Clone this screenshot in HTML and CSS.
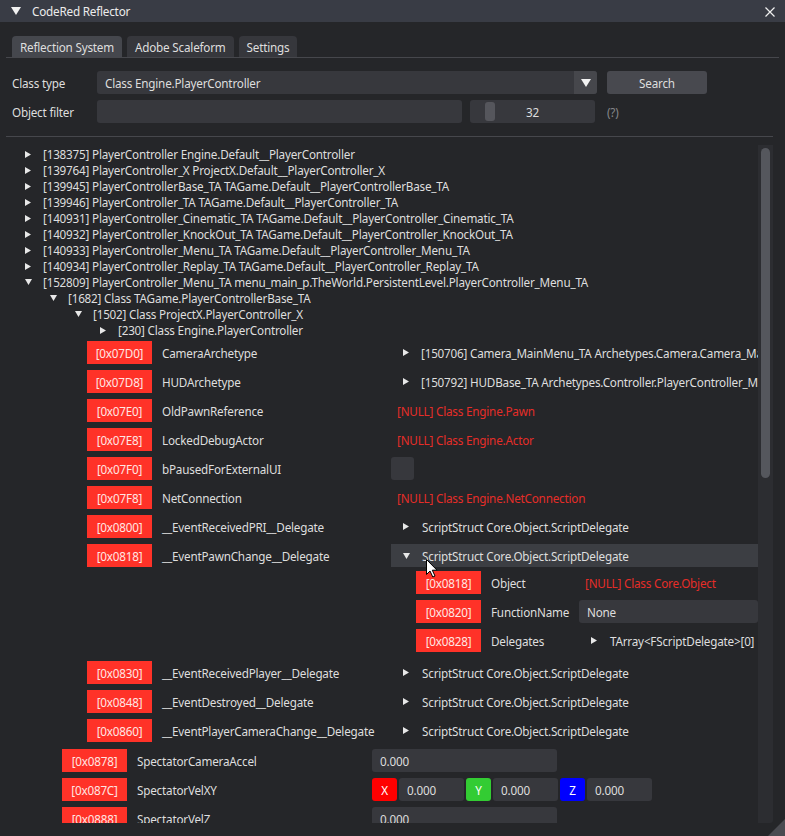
FILE: index.html
```html
<!DOCTYPE html>
<html>
<head>
<meta charset="utf-8">
<link rel="stylesheet" href="styles.css">
</head>
<body>
<div class="window">
  <div class="titlebar">
    <svg class="title-tri" width="10" height="8" viewBox="0 0 10 8"><polygon points="0,0 10,0 5,8" fill="#f2f2f2"/></svg>
    <span class="title">CodeRed Reflector</span>
    <svg class="close" width="10" height="10" viewBox="0 0 10 10"><path d="M0.5 0.5 L9.5 9.5 M9.5 0.5 L0.5 9.5" stroke="#f0f0f0" stroke-width="1.2"/></svg>
  </div>
  <div class="content">
    <div class="tabbar">
      <div class="tab active">Reflection System</div>
      <div class="tab">Adobe Scaleform</div>
      <div class="tab">Settings</div>
    </div>
    <div class="form">
      <div class="frow first">
        <div class="flabel">Class type</div>
        <div class="combo">
          <span class="combo-text">Class Engine.PlayerController</span>
          <span class="combo-arrow"><svg width="10" height="8" viewBox="0 0 10 8"><polygon points="0,0 10,0 5,8" fill="#f2f2f2"/></svg></span>
        </div>
        <div class="btn">Search</div>
      </div>
      <div class="frow">
        <div class="flabel">Object filter</div>
        <div class="finput"></div>
        <div class="slider"><span class="sgrab"></span><span class="sval">32</span></div>
        <div class="help">(?)</div>
      </div>
    </div>
    <div class="sep"></div>
    <div class="child">
      <div class="scroll">
        <div class="trow l0"><span class="arr"><svg width="6" height="7" viewBox="0 0 6 7"><polygon points="0,0 6,3.5 0,7"/></svg></span>[138375] PlayerController Engine.Default__PlayerController</div>
        <div class="trow l0"><span class="arr"><svg width="6" height="7" viewBox="0 0 6 7"><polygon points="0,0 6,3.5 0,7"/></svg></span>[139764] PlayerController_X ProjectX.Default__PlayerController_X</div>
        <div class="trow l0"><span class="arr"><svg width="6" height="7" viewBox="0 0 6 7"><polygon points="0,0 6,3.5 0,7"/></svg></span>[139945] PlayerControllerBase_TA TAGame.Default__PlayerControllerBase_TA</div>
        <div class="trow l0"><span class="arr"><svg width="6" height="7" viewBox="0 0 6 7"><polygon points="0,0 6,3.5 0,7"/></svg></span>[139946] PlayerController_TA TAGame.Default__PlayerController_TA</div>
        <div class="trow l0"><span class="arr"><svg width="6" height="7" viewBox="0 0 6 7"><polygon points="0,0 6,3.5 0,7"/></svg></span>[140931] PlayerController_Cinematic_TA TAGame.Default__PlayerController_Cinematic_TA</div>
        <div class="trow l0"><span class="arr"><svg width="6" height="7" viewBox="0 0 6 7"><polygon points="0,0 6,3.5 0,7"/></svg></span>[140932] PlayerController_KnockOut_TA TAGame.Default__PlayerController_KnockOut_TA</div>
        <div class="trow l0"><span class="arr"><svg width="6" height="7" viewBox="0 0 6 7"><polygon points="0,0 6,3.5 0,7"/></svg></span>[140933] PlayerController_Menu_TA TAGame.Default__PlayerController_Menu_TA</div>
        <div class="trow l0"><span class="arr"><svg width="6" height="7" viewBox="0 0 6 7"><polygon points="0,0 6,3.5 0,7"/></svg></span>[140934] PlayerController_Replay_TA TAGame.Default__PlayerController_Replay_TA</div>
        <div class="trow l0"><span class="arr"><svg width="7" height="6" viewBox="0 0 7 6"><polygon points="0,0 7,0 3.5,6"/></svg></span>[152809] PlayerController_Menu_TA menu_main_p.TheWorld.PersistentLevel.PlayerController_Menu_TA</div>
        <div class="trow l1"><span class="arr"><svg width="7" height="6" viewBox="0 0 7 6"><polygon points="0,0 7,0 3.5,6"/></svg></span>[1682] Class TAGame.PlayerControllerBase_TA</div>
        <div class="trow l2"><span class="arr"><svg width="7" height="6" viewBox="0 0 7 6"><polygon points="0,0 7,0 3.5,6"/></svg></span>[1502] Class ProjectX.PlayerController_X</div>
        <div class="trow l3"><span class="arr"><svg width="6" height="7" viewBox="0 0 6 7"><polygon points="0,0 6,3.5 0,7"/></svg></span>[230] Class Engine.PlayerController</div>

        <div class="tbl tbl-a">
          <div class="lbl">[0x07D0]</div><div class="nm">CameraArchetype</div>
          <div class="val"><div class="node"><span class="varr"><svg width="6" height="7" viewBox="0 0 6 7"><polygon points="0,0 6,3.5 0,7"/></svg></span>[150706] Camera_MainMenu_TA Archetypes.Camera.Camera_MainMenu_TA</div></div>

          <div class="lbl">[0x07D8]</div><div class="nm">HUDArchetype</div>
          <div class="val"><div class="node"><span class="varr"><svg width="6" height="7" viewBox="0 0 6 7"><polygon points="0,0 6,3.5 0,7"/></svg></span>[150792] HUDBase_TA Archetypes.Controller.PlayerController_Menu_TA</div></div>

          <div class="lbl">[0x07E0]</div><div class="nm">OldPawnReference</div>
          <div class="val"><div class="null">[NULL] Class Engine.Pawn</div></div>

          <div class="lbl">[0x07E8]</div><div class="nm">LockedDebugActor</div>
          <div class="val"><div class="null">[NULL] Class Engine.Actor</div></div>

          <div class="lbl">[0x07F0]</div><div class="nm">bPausedForExternalUI</div>
          <div class="val"><div class="chk"></div></div>

          <div class="lbl">[0x07F8]</div><div class="nm">NetConnection</div>
          <div class="val"><div class="null">[NULL] Class Engine.NetConnection</div></div>

          <div class="lbl">[0x0800]</div><div class="nm">__EventReceivedPRI__Delegate</div>
          <div class="val"><div class="node"><span class="varr"><svg width="6" height="7" viewBox="0 0 6 7"><polygon points="0,0 6,3.5 0,7"/></svg></span>ScriptStruct Core.Object.ScriptDelegate</div></div>

          <div class="lbl">[0x0818]</div><div class="nm">__EventPawnChange__Delegate</div>
          <div class="val">
            <div class="node hdr"><span class="varr"><svg width="7" height="6" viewBox="0 0 7 6"><polygon points="0,0 7,0 3.5,6"/></svg></span>ScriptStruct Core.Object.ScriptDelegate</div>
            <div class="tbl tbl-n">
              <div class="lbl">[0x0818]</div><div class="nm">Object</div>
              <div class="val"><div class="null">[NULL] Class Core.Object</div></div>
              <div class="lbl">[0x0820]</div><div class="nm">FunctionName</div>
              <div class="val"><div class="input">None</div></div>
              <div class="lbl">[0x0828]</div><div class="nm">Delegates</div>
              <div class="val"><div class="node"><span class="varr"><svg width="6" height="7" viewBox="0 0 6 7"><polygon points="0,0 6,3.5 0,7"/></svg></span>TArray&lt;FScriptDelegate&gt;[0]</div></div>
            </div>
          </div>

          <div class="lbl">[0x0830]</div><div class="nm">__EventReceivedPlayer__Delegate</div>
          <div class="val"><div class="node"><span class="varr"><svg width="6" height="7" viewBox="0 0 6 7"><polygon points="0,0 6,3.5 0,7"/></svg></span>ScriptStruct Core.Object.ScriptDelegate</div></div>

          <div class="lbl">[0x0848]</div><div class="nm">__EventDestroyed__Delegate</div>
          <div class="val"><div class="node"><span class="varr"><svg width="6" height="7" viewBox="0 0 6 7"><polygon points="0,0 6,3.5 0,7"/></svg></span>ScriptStruct Core.Object.ScriptDelegate</div></div>

          <div class="lbl">[0x0860]</div><div class="nm">__EventPlayerCameraChange__Delegate</div>
          <div class="val"><div class="node"><span class="varr"><svg width="6" height="7" viewBox="0 0 6 7"><polygon points="0,0 6,3.5 0,7"/></svg></span>ScriptStruct Core.Object.ScriptDelegate</div></div>
        </div>

        <div class="tbl tbl-o">
          <div class="lbl">[0x0878]</div><div class="nm">SpectatorCameraAccel</div>
          <div class="val"><div class="input w185">0.000</div></div>

          <div class="lbl">[0x087C]</div><div class="nm">SpectatorVelXY</div>
          <div class="val vec">
            <div class="axis ax-x">X</div><div class="input w65">0.000</div>
            <div class="axis ax-y">Y</div><div class="input w65">0.000</div>
            <div class="axis ax-z">Z</div><div class="input w65">0.000</div>
          </div>

          <div class="lbl">[0x0888]</div><div class="nm">SpectatorVelZ</div>
          <div class="val"><div class="input w185">0.000</div></div>
        </div>
      </div>
      <div class="scrollbar"><div class="sb-grab"></div></div>
    </div>
  </div>
  <svg class="grip" width="17" height="17" viewBox="0 0 17 17"><polygon points="0,17 17,17 17,0" fill="#4a4b51"/></svg>
  <svg class="cursor" width="13" height="19" viewBox="0 0 13 19"><path d="M0.5 0.5 L0.5 15.5 L4 12 L6.8 18 L9 17 L6.3 11.2 L11 11.2 Z" fill="#ffffff" stroke="#000000" stroke-width="1"/></svg>
</div>
</body>
</html>
```

FILE: styles.css
```css
* { box-sizing: border-box; }

body {
  margin: 0;
  background: #252629;
  font-family: "Noto Sans", "Open Sans", sans-serif;
  font-size: 11.7px;
  letter-spacing: -0.2px;
  color: #dedede;
  overflow: hidden;
}

.window {
  position: relative;
  width: 785px;
  height: 836px;
  overflow: hidden;
  background: #252629;
}

.titlebar {
  height: 22px;
  background: #393c45;
  display: flex;
  align-items: center;
  position: relative;
}

.title-tri {
  margin-left: 11px;
  margin-right: 11px;
}

.title {
  color: #ececec;
}

.close {
  position: absolute;
  right: 10px;
  top: 7px;
}

.content {
  padding: 0 6px;
}

.tabbar {
  margin-top: 14px;
  padding-left: 6px;
  display: flex;
  gap: 5px;
  border-bottom: 1px solid #46474c;
}

.tab {
  height: 21px;
  padding: 0 8px;
  display: flex;
  align-items: center;
  background: #36373c;
  border-radius: 4px 4px 0 0;
}

.tab.active {
  background: #45474d;
}

.form {
  padding-left: 6px;
}

.frow {
  display: flex;
  align-items: center;
  height: 23px;
  margin-top: 6px;
}

.frow.first {
  margin-top: 13px;
}

.flabel {
  width: 85px;
}

.combo {
  width: 500px;
  height: 23px;
  background: #37383d;
  border-radius: 3px;
  display: flex;
  align-items: center;
  overflow: hidden;
}

.combo-text {
  flex: 1;
  padding-left: 8px;
}

.combo-arrow {
  width: 23px;
  height: 23px;
  background: #46474c;
  display: flex;
  align-items: center;
  justify-content: center;
}

.btn {
  margin-left: 10px;
  width: 100px;
  height: 23px;
  background: #48494f;
  border-radius: 3px;
  display: flex;
  align-items: center;
  justify-content: center;
}

.finput {
  width: 365px;
  height: 23px;
  background: #37383d;
  border-radius: 3px;
}

.slider {
  position: relative;
  margin-left: 8px;
  width: 125px;
  height: 23px;
  background: #37383d;
  border-radius: 3px;
  display: flex;
  align-items: center;
  justify-content: center;
}

.sgrab {
  position: absolute;
  left: 15px;
  top: 2px;
  width: 10px;
  height: 19px;
  background: #55565c;
  border-radius: 3px;
}

.help {
  margin-left: 12px;
  color: #85868a;
}

.sep {
  margin-top: 13px;
  margin-right: 6px;
  height: 1px;
  background: #46474c;
}

.child {
  margin-top: 8px;
  width: 767px;
  height: 678px;
  display: flex;
}

.scroll {
  flex: 1;
  min-width: 0;
  overflow: hidden;
  padding-top: 1px;
  white-space: nowrap;
}

.scrollbar {
  width: 15px;
  height: 100%;
  background: #2c2d31;
  border-radius: 0 0 3px 0;
  padding: 3px;
}

.sb-grab {
  width: 9px;
  height: 330px;
  background: #55575d;
  border-radius: 5px;
}

.trow {
  height: 16px;
  display: flex;
  align-items: center;
}

.trow.l0 { padding-left: 19px; }
.trow.l1 { padding-left: 44px; }
.trow.l2 { padding-left: 69px; }
.trow.l3 { padding-left: 94px; }

.arr {
  width: 7px;
  margin-right: 11px;
  display: flex;
  align-items: center;
  fill: #e8e8e8;
}

.tbl {
  display: grid;
  row-gap: 6px;
  column-gap: 10px;
  align-items: start;
}

.tbl-a {
  margin-left: 81px;
  margin-top: 3px;
  grid-template-columns: 65px 219px minmax(0, 1fr);
}

.tbl-n {
  margin-left: 25px;
  margin-top: 4px;
  margin-bottom: 3px;
  grid-template-columns: 65px 78px minmax(0, 1fr);
}

.tbl-o {
  margin-left: 56px;
  margin-top: 7px;
  grid-template-columns: 65px 225px minmax(0, 1fr);
}

.lbl {
  height: 23px;
  background: #ff3228;
  color: #ffe6e3;
  display: flex;
  align-items: center;
  justify-content: center;
}

.nm {
  height: 23px;
  display: flex;
  align-items: center;
}

.val {
  min-width: 0;
}

.node {
  height: 23px;
  display: flex;
  align-items: center;
  padding-left: 12px;
}

.node.hdr {
  background: #3c3e43;
}

.varr {
  width: 7px;
  margin-right: 12px;
  display: flex;
  align-items: center;
  fill: #e8e8e8;
}

.null {
  height: 23px;
  display: flex;
  align-items: center;
  padding-left: 6px;
  color: #e62d28;
}

.chk {
  width: 23px;
  height: 23px;
  background: #37383d;
  border-radius: 3px;
}

.input {
  height: 23px;
  background: #37383d;
  border-radius: 3px;
  padding-left: 8px;
  display: flex;
  align-items: center;
}

.input.w185 { width: 185px; }
.input.w65 { width: 65px; }

.vec {
  display: flex;
  gap: 2px;
}

.axis {
  width: 25px;
  height: 23px;
  border-radius: 3px;
  display: flex;
  align-items: center;
  justify-content: center;
  color: #ffffff;
}

.ax-x { background: #ff0000; }
.ax-y { background: #33cc33; }
.ax-z { background: #0000ff; }

.grip {
  position: absolute;
  right: 0;
  bottom: 0;
}

.cursor {
  position: absolute;
  left: 426px;
  top: 559px;
}
```
